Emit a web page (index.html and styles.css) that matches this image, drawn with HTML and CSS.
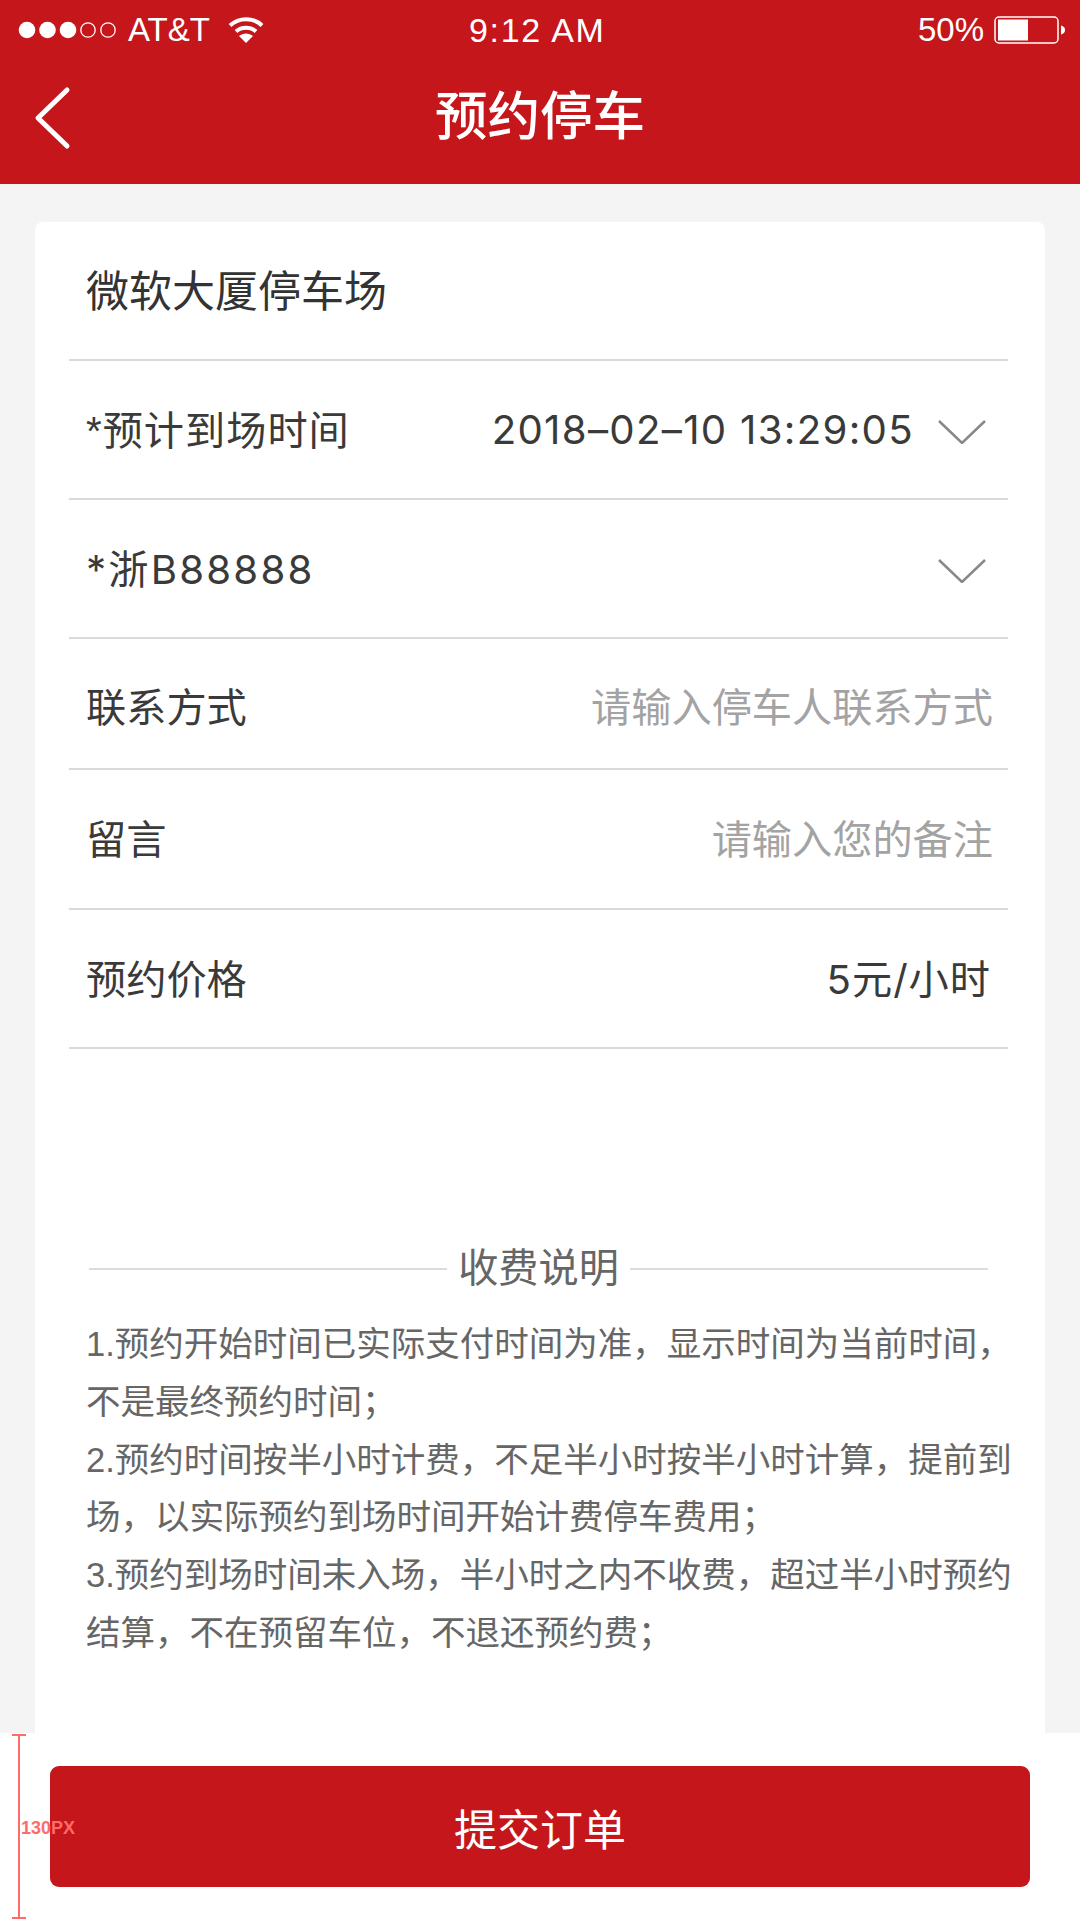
FILE: index.html
```html
<!DOCTYPE html>
<html lang="zh-CN">
<head>
<meta charset="utf-8">
<title>预约停车</title>
<link rel="stylesheet" href="styles.css">
</head>
<body>
<div class="page">
  <header class="top">
    <div class="status">
      <div class="status-left">
        <svg class="signal" width="88" height="20" viewBox="0 0 88 20"><circle cx="9" cy="10" r="8.3" fill="#fff"/><circle cx="29.5" cy="10" r="8.3" fill="#fff"/><circle cx="50" cy="10" r="8.3" fill="#fff"/><circle cx="70" cy="10" r="7.2" fill="none" stroke="#fff" stroke-width="1.3"/><circle cx="90" cy="10" r="7.2" fill="none" stroke="#fff" stroke-width="1.3"/></svg>
        <span class="carrier">AT&amp;T</span>
        <svg class="wifi" width="36" height="27" viewBox="0 0 36 27"><path d="M2 9.5C11 1 25 1 34 9.5" fill="none" stroke="#fff" stroke-width="4"/><path d="M8 15.5C13.500 10.500 22.500 10.500 28 15.500" fill="none" stroke="#fff" stroke-width="4"/><path d="M18 27L11 20C15 16.500 21 16.500 25 20Z" fill="#fff"/></svg>
      </div>
      <span class="time">9:12 AM</span>
      <div class="status-right">
        <span class="percent">50%</span>
        <svg width="72" height="28" viewBox="0 0 72 28"><rect x="1" y="1" width="63" height="26" rx="4" fill="none" stroke="#fff" stroke-width="1.500"/><rect x="4" y="3.500" width="30" height="21" fill="#fff"/><path d="M67 9.500C70 10 71 12 71 14C71 16 70 18 67 18.500Z" fill="#fff"/></svg>
      </div>
    </div>
    <nav class="nav">
      <svg class="back" width="42" height="68" viewBox="0 0 42 68"><path d="M36 6L7 34L36 62" fill="none" stroke="#fff" stroke-width="5" stroke-linecap="round" stroke-linejoin="round"/></svg>
      <h1 class="nav-title">预约停车</h1>
    </nav>
  </header>

  <main class="content">
    <section class="card">
      <div class="row row-title">微软大厦停车场</div>
      <div class="row">
        <span class="label label-star">*预计到场时间</span>
        <span class="picker">
          <span class="date">2018–02–10 13:29:05</span>
          <svg class="chevron" width="48" height="24" viewBox="0 0 48 24"><path d="M1 1L24 23L47 1" fill="none" stroke="#888" stroke-width="2.500"/></svg>
        </span>
      </div>
      <div class="row">
        <span class="label plate">*浙B88888</span>
        <span class="picker">
          <svg class="chevron" width="48" height="24" viewBox="0 0 48 24"><path d="M1 1L24 23L47 1" fill="none" stroke="#888" stroke-width="2.500"/></svg>
        </span>
      </div>
      <div class="row row-short">
        <span class="label">联系方式</span>
        <span class="hint">请输入停车人联系方式</span>
      </div>
      <div class="row">
        <span class="label">留言</span>
        <span class="hint">请输入您的备注</span>
      </div>
      <div class="row">
        <span class="label">预约价格</span>
        <span class="price">5元/小时</span>
      </div>

      <div class="fee-head">
        <span class="fee-line"></span>
        <span class="fee-title">收费说明</span>
        <span class="fee-line"></span>
      </div>
      <p class="notes">1.预约开始时间已实际支付时间为准，显示时间为当前时间，不是最终预约时间；<br>2.预约时间按半小时计费，不足半小时按半小时计算，提前到场，以实际预约到场时间开始计费停车费用；<br>3.预约到场时间未入场，半小时之内不收费，超过半小时预约结算，不在预留车位，不退还预约费；</p>
    </section>
  </main>

  <footer class="footer">
    <div class="measure">
      <span class="measure-bar"></span>
      <span class="measure-text">130PX</span>
    </div>
    <button class="submit" type="button">提交订单</button>
  </footer>
</div>
</body>
</html>
```
FILE: styles.css
```css
* { box-sizing: border-box; }
html, body { margin: 0; padding: 0; }
body {
  width: 1080px;
  height: 1920px;
  overflow: hidden;
  background: #f4f4f4;
  font-family: "Liberation Sans", "Noto Sans CJK SC", sans-serif;
  color: #333;
}
.page { width: 1080px; height: 1920px; display: flex; flex-direction: column; }

.top { flex: none; height: 184px; background: #c5161b; color: #fff; }
.status {
  height: 60px;
  padding: 0 14px 0 18px;
  display: flex;
  align-items: center;
  justify-content: space-between;
  position: relative;
}
.status-left, .status-right { display: flex; align-items: center; }
.signal { overflow: visible; margin-right: 22px; }
.carrier, .percent { font-size: 33px; line-height: 40px; }
.carrier { margin-right: 18px; }
.wifi { margin-top: -2px; }
.time {
  font-size: 34px;
  line-height: 40px;
  letter-spacing: 1.700px;
  position: absolute;
  left: 469px;
  top: 10px;
}
.percent { margin-right: 10px; }
.nav {
  height: 124px;
  padding-left: 31px;
  display: flex;
  align-items: center;
  position: relative;
}
.back { margin-top: -8px; }
.nav-title {
  position: absolute;
  left: 0;
  right: 0;
  top: 27px;
  margin: 0;
  text-align: center;
  font-size: 52.500px;
  line-height: 60px;
  font-weight: 500;
}

.content { flex: 1; min-height: 0; padding: 38px 35px 0; }
.card {
  height: 100%;
  background: #fff;
  border-radius: 8px 8px 0 0;
  padding: 0 37px 0 34px;
}
.row {
  height: 139px;
  border-bottom: 2px solid #d9d9d9;
  padding: 0 15px 5px 18px;
  display: flex;
  align-items: center;
  justify-content: space-between;
  font-size: 40.200px;
}
.row-short { height: 131px; padding-bottom: 0; padding-top: 2px; }
.row-short + .row { height: 140px; }
.row-title { font-size: 43px; font-weight: 400; color: #333; padding-left: 17px; }
.label { color: #3a3a3a; margin-left: -1px; }
.label-star { letter-spacing: 1px; }
.plate { font-family: Inter, "Noto Sans CJK SC", sans-serif; letter-spacing: 2.200px; }
.picker { display: flex; align-items: center; margin-right: 7px; }
.date {
  font-family: Inter, "Noto Sans CJK SC", sans-serif;
  letter-spacing: 1.300px;
  color: #3a3a3a;
  margin-top: 5px;
}
.chevron { margin-left: 24px; margin-top: 9px; }
.hint { color: #a3a3a3; }
.price {
  font-family: Inter, "Noto Sans CJK SC", sans-serif;
  letter-spacing: 1px;
  color: #3a3a3a;
  margin-right: 2px;
}

.fee-head {
  margin: 195px 20px 0 20px;
  height: 50px;
  display: flex;
  align-items: center;
  gap: 11px;
}
.fee-line { flex: 1; height: 2px; background: #dcdcdc; }
.fee-title { font-size: 40.200px; line-height: 50px; color: #666; }
.notes {
  margin: 22px -10px 0 17px;
  font-size: 34.500px;
  line-height: 57.800px;
  color: #666;
}

.footer {
  flex: none;
  height: 187px;
  background: #fff;
  padding: 33px 50px;
  position: relative;
  z-index: 1;
}
.submit {
  display: block;
  width: 100%;
  height: 121px;
  border: 0;
  border-radius: 9px;
  background: #c5161b;
  color: #fff;
  font-family: inherit;
  font-size: 43px;
}
.measure { position: absolute; left: 12px; top: 0; bottom: 0; width: 70px; }
.measure-bar {
  position: absolute;
  left: 0;
  top: 1px;
  bottom: 1px;
  width: 14px;
  border-top: 2px solid #ff6a6a;
  border-bottom: 2px solid #ff6a6a;
  background: linear-gradient(#ff6a6a, #ff6a6a) center / 2px 100% no-repeat;
}
.measure-text {
  position: absolute;
  left: 9px;
  top: 84px;
  font-size: 18px;
  line-height: 22px;
  font-weight: 700;
  color: #ff6a6a;
  z-index: 2;
}
```
